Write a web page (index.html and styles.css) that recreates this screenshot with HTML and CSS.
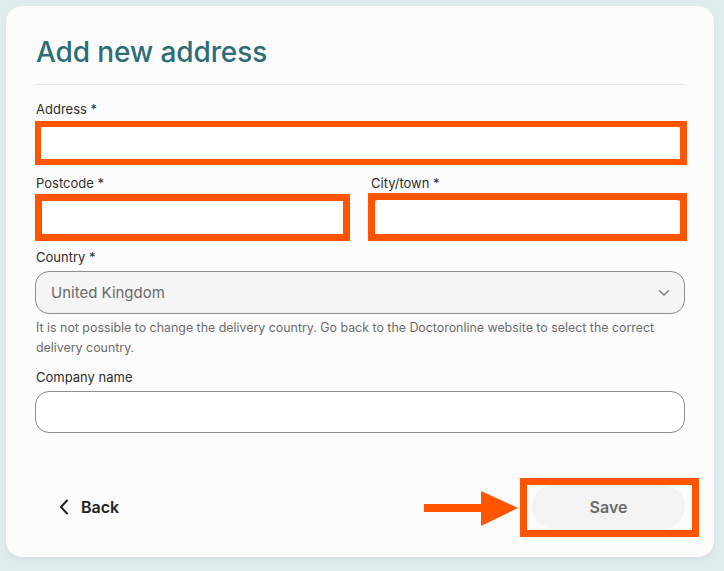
FILE: index.html
```html
<!DOCTYPE html>
<html lang="en">
<head>
    <meta charset="UTF-8">
    <meta name="viewport" content="width=device-width, initial-scale=1.0">
    <title>Add new address</title>
    <link rel="stylesheet" href="styles.css">
</head>
<body>
    <div class="page">
        <form class="card">
            <h1 class="card-title">Add new address</h1>

            <div class="field">
                <label for="address">Address *</label>
                <input type="text" id="address" class="text-input">
            </div>

            <div class="field-row">
                <div class="field">
                    <label for="postcode">Postcode *</label>
                    <input type="text" id="postcode" class="text-input">
                </div>
                <div class="field">
                    <label for="city">City/town *</label>
                    <input type="text" id="city" class="text-input">
                </div>
            </div>

            <div class="field">
                <label for="country">Country *</label>
                <div class="select-box" id="country">
                    <span>United Kingdom</span>
                    <svg class="select-arrow" width="12" height="8" viewBox="0 0 12 8">
                        <path d="M1.5 1.8 L6 6 L10.5 1.8" fill="none" stroke="#777" stroke-width="1.4" stroke-linecap="round" stroke-linejoin="round"/>
                    </svg>
                </div>
                <p class="help-text">It is not possible to change the delivery country. Go back to the Doctoronline website to select the correct delivery country.</p>
            </div>

            <div class="field">
                <label for="company">Company name</label>
                <input type="text" id="company" class="text-input">
            </div>

            <div class="card-footer">
                <button type="button" class="btn-back">
                    <svg width="10" height="16" viewBox="0 0 10 16">
                        <path d="M8 1.5 L2 8 L8 14.5" fill="none" stroke="#222" stroke-width="2" stroke-linecap="round" stroke-linejoin="round"/>
                    </svg>
                    Back
                </button>
                <button type="button" class="btn-save">Save</button>
            </div>
        </form>

        <!-- orange markers drawn on top of the form -->
        <div class="marker marker-address"></div>
        <div class="marker marker-postcode"></div>
        <div class="marker marker-city"></div>
        <div class="marker marker-save"></div>
        <svg class="marker-arrow" width="100" height="40" viewBox="0 0 100 40">
            <rect x="0" y="13" width="60" height="8" fill="#ff5500"/>
            <polygon points="57,0 94,17 57,35" fill="#ff5500"/>
        </svg>
    </div>
</body>
</html>
```

FILE: styles.css
```css
body {
    margin: 0;
    padding: 0;
    background-color: #deeced;
    font-family: Inter, "Noto Sans", Arial, sans-serif;
    color: #2a2a2a;
}

.page {
    position: relative;
    width: 724px;
    height: 571px;
    overflow: hidden;
}

.card {
    width: 708px;
    height: 551px;
    margin: 6px 0 0 6px;
    box-sizing: border-box;
    padding: 28px 29px 28px 29px;
    background-color: #fcfcfc;
    border-radius: 16px;
    box-shadow: 0 2px 6px rgba(0, 0, 0, 0.06);
    display: flex;
    flex-direction: column;
}

.card-title {
    margin: 0 0 15px 0;
    padding: 0 0 14px 1px;
    font-size: 28px;
    line-height: 36px;
    font-weight: 500;
    color: #2c6d76;
    letter-spacing: -0.1px;
    border-bottom: 1px solid #e4e4e4;
}

.field {
    display: flex;
    flex-direction: column;
    margin-bottom: 9px;
}

.field label {
    font-size: 13px;
    line-height: 18px;
    margin: 0 0 5px 1px;
    color: #2e2e2e;
}

.field-row {
    display: grid;
    grid-template-columns: 1fr 1fr;
    column-gap: 20px;
}

.text-input {
    height: 42px;
    box-sizing: border-box;
    border: 1px solid #8d8d8d;
    border-radius: 14px;
    background-color: #ffffff;
    padding: 0 15px;
    font: inherit;
}

.select-box {
    height: 43px;
    box-sizing: border-box;
    border: 1px solid #8d8d8d;
    border-radius: 14px;
    background-color: #f5f5f5;
    padding: 0 14px 0 15px;
    display: flex;
    align-items: center;
    justify-content: space-between;
    font-size: 15px;
    color: #6a6a6a;
}

.help-text {
    margin: 4px 0 1px 1px;
    font-size: 12.4px;
    line-height: 20px;
    color: #6c6c6c;
}

.card-footer {
    margin-top: auto;
    display: flex;
    justify-content: space-between;
    align-items: center;
}

.btn-back {
    height: 44px;
    padding: 0 24px;
    border: none;
    background: none;
    display: flex;
    align-items: center;
    gap: 12px;
    font-family: inherit;
    font-size: 16px;
    font-weight: 600;
    color: #222222;
}

.btn-save {
    width: 153px;
    height: 44px;
    border: none;
    border-radius: 22px;
    background-color: #f3f3f3;
    font-family: inherit;
    font-size: 16px;
    font-weight: 600;
    color: #6b6b6b;
}

.marker {
    position: absolute;
    box-sizing: border-box;
    border: 7px solid #ff5500;
}

.marker-address {
    left: 35px;
    top: 121px;
    width: 652px;
    height: 44px;
    border-width: 6px 7px 6px 6px;
}

.marker-postcode {
    left: 35px;
    top: 194px;
    width: 315px;
    height: 47px;
}

.marker-city {
    left: 368px;
    top: 193px;
    width: 319px;
    height: 48px;
}

.marker-save {
    left: 520px;
    top: 478px;
    width: 179px;
    height: 59px;
}

.marker-arrow {
    position: absolute;
    left: 424px;
    top: 491px;
}
```
